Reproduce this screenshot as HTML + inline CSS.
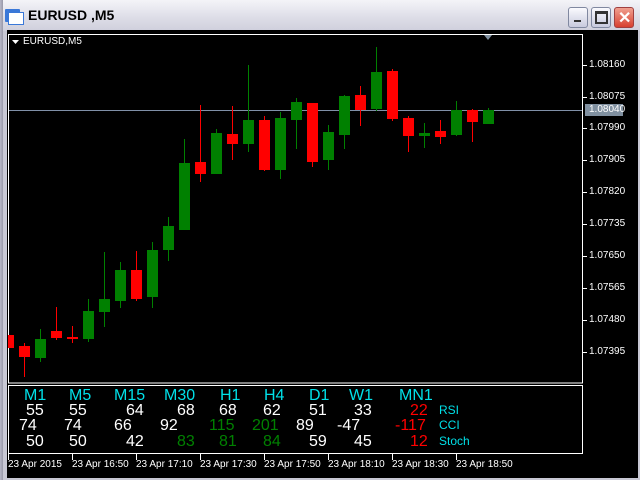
<!DOCTYPE html>
<html><head><style>
body{margin:0;width:640px;height:480px;overflow:hidden;background:#c8c8d4;font-family:"Liberation Sans",sans-serif;position:relative}
.t{position:absolute;white-space:nowrap}
.s{font-size:16px;line-height:15px}
.c{color:#00e0e8}.w{color:#fff}.g{color:#008000}.r{color:#ff0000}
.ax{position:absolute;font-size:10px;color:#fff;line-height:10px}
</style></head><body>
<div style="position:absolute;left:0;top:0;width:640px;height:31px;background:linear-gradient(#f4f4f8,#dcdce6 60%,#cfcfdc)"></div>
<div style="position:absolute;left:0;top:0;width:3px;height:480px;background:linear-gradient(90deg,#b8b8c8,#9898a8)"></div>
<div style="position:absolute;left:5px;top:9px;width:15px;height:13px;background:#3a78d8;border-radius:1px"></div>
<div style="position:absolute;left:8px;top:12px;width:14px;height:11px;background:#fff;border:1px solid #3a78d8"></div>
<div class="t" style="left:28px;top:7px;font-size:14px;font-weight:bold;color:#000">EURUSD ,M5</div>
<div style="position:absolute;left:568px;top:7px;width:18px;height:19px;border:1px solid #8088a0;border-radius:3px;background:linear-gradient(#fafafe,#c8cade)"><div style="position:absolute;left:5px;top:12px;width:7px;height:2px;background:#333"></div></div>
<div style="position:absolute;left:591px;top:7px;width:18px;height:19px;border:1px solid #8088a0;border-radius:3px;background:linear-gradient(#fafafe,#c8cade)"><div style="position:absolute;left:3px;top:3px;width:9px;height:8px;border:2px solid #333;border-top-width:3px"></div></div>
<div style="position:absolute;left:614px;top:7px;width:18px;height:19px;border:1px solid #a04040;border-radius:3px;background:linear-gradient(#f0a090,#d84030)"><div class="t" style="left:3px;top:0px;color:#fff;font-size:16px;font-weight:bold">✕</div></div>
<div style="position:absolute;left:7px;top:30px;width:631px;height:448px;background:#000"></div>
<svg style="position:absolute;left:0;top:0" width="640" height="480">
<rect x="8.5" y="34.5" width="574" height="348.5" fill="none" stroke="#fff"/>
<rect x="8.5" y="385.5" width="574" height="68" fill="none" stroke="#fff"/>
<polygon points="484,35 492,35 488,40" fill="#8090a0"/>
<polygon points="12,40 19,40 15.5,44" fill="#fff"/>
<line x1="9" y1="110.5" x2="582" y2="110.5" stroke="#8090a8"/>
<g fill="#ff0000" stroke="#ff0000">
<rect x="8" y="335" width="6" height="13" stroke="none"/>
<line x1="24.5" y1="343" x2="24.5" y2="377"/><rect x="19" y="346" width="11" height="11" stroke="none"/>
<line x1="56.5" y1="307" x2="56.5" y2="340"/><rect x="51" y="331" width="11" height="7" stroke="none"/>
<line x1="72.5" y1="326" x2="72.5" y2="343"/><rect x="67" y="337" width="11" height="2" stroke="none"/>
<line x1="136.5" y1="251" x2="136.5" y2="301"/><rect x="131" y="270" width="11" height="29" stroke="none"/>
<line x1="200.5" y1="105" x2="200.5" y2="182"/><rect x="195" y="162" width="11" height="12" stroke="none"/>
<line x1="232.5" y1="106" x2="232.5" y2="160"/><rect x="227" y="134" width="11" height="10" stroke="none"/>
<line x1="264.5" y1="116" x2="264.5" y2="171"/><rect x="259" y="120" width="11" height="50" stroke="none"/>
<line x1="312.5" y1="103" x2="312.5" y2="167"/><rect x="307" y="103" width="11" height="59" stroke="none"/>
<line x1="360.5" y1="86" x2="360.5" y2="126"/><rect x="355" y="95" width="11" height="15" stroke="none"/>
<line x1="392.5" y1="69" x2="392.5" y2="121"/><rect x="387" y="71" width="11" height="48" stroke="none"/>
<line x1="408.5" y1="116" x2="408.5" y2="152"/><rect x="403" y="118" width="11" height="18" stroke="none"/>
<line x1="440.5" y1="120" x2="440.5" y2="144"/><rect x="435" y="131" width="11" height="6" stroke="none"/>
<line x1="472.5" y1="109" x2="472.5" y2="142"/><rect x="467" y="110" width="11" height="12" stroke="none"/>
</g>
<g fill="#008000" stroke="#008000">
<line x1="40.5" y1="329" x2="40.5" y2="362"/><rect x="35" y="339" width="11" height="19" stroke="none"/>
<line x1="88.5" y1="299" x2="88.5" y2="342"/><rect x="83" y="311" width="11" height="28" stroke="none"/>
<line x1="104.5" y1="252" x2="104.5" y2="327"/><rect x="99" y="299" width="11" height="13" stroke="none"/>
<line x1="120.5" y1="262" x2="120.5" y2="308"/><rect x="115" y="270" width="11" height="31" stroke="none"/>
<line x1="152.5" y1="242" x2="152.5" y2="308"/><rect x="147" y="250" width="11" height="47" stroke="none"/>
<line x1="168.5" y1="217" x2="168.5" y2="261"/><rect x="163" y="226" width="11" height="24" stroke="none"/>
<line x1="184.5" y1="139" x2="184.5" y2="230"/><rect x="179" y="163" width="11" height="67" stroke="none"/>
<line x1="216.5" y1="129" x2="216.5" y2="174"/><rect x="211" y="133" width="11" height="41" stroke="none"/>
<line x1="248.5" y1="65" x2="248.5" y2="152"/><rect x="243" y="120" width="11" height="24" stroke="none"/>
<line x1="280.5" y1="112" x2="280.5" y2="179"/><rect x="275" y="118" width="11" height="52" stroke="none"/>
<line x1="296.5" y1="98" x2="296.5" y2="149"/><rect x="291" y="102" width="11" height="18" stroke="none"/>
<line x1="328.5" y1="125" x2="328.5" y2="170"/><rect x="323" y="132" width="11" height="28" stroke="none"/>
<line x1="344.5" y1="95" x2="344.5" y2="149"/><rect x="339" y="96" width="11" height="39" stroke="none"/>
<line x1="376.5" y1="47" x2="376.5" y2="111"/><rect x="371" y="72" width="11" height="37" stroke="none"/>
<line x1="424.5" y1="123" x2="424.5" y2="148"/><rect x="419" y="133" width="11" height="3" stroke="none"/>
<line x1="456.5" y1="101" x2="456.5" y2="136"/><rect x="451" y="110" width="11" height="25" stroke="none"/>
<line x1="488.5" y1="108" x2="488.5" y2="124"/><rect x="483" y="110" width="11" height="14" stroke="none"/>
</g>
<g stroke="#fff">
<line x1="583" y1="65.5" x2="587" y2="65.5"/><line x1="583" y1="97.5" x2="587" y2="97.5"/>
<line x1="583" y1="128.5" x2="587" y2="128.5"/><line x1="583" y1="160.5" x2="587" y2="160.5"/>
<line x1="583" y1="192.5" x2="587" y2="192.5"/><line x1="583" y1="224.5" x2="587" y2="224.5"/>
<line x1="583" y1="256.5" x2="587" y2="256.5"/><line x1="583" y1="288.5" x2="587" y2="288.5"/>
<line x1="583" y1="320.5" x2="587" y2="320.5"/><line x1="583" y1="352.5" x2="587" y2="352.5"/>
<line x1="8.5" y1="454" x2="8.5" y2="460"/><line x1="72.5" y1="454" x2="72.5" y2="460"/>
<line x1="136.5" y1="454" x2="136.5" y2="460"/><line x1="200.5" y1="454" x2="200.5" y2="460"/>
<line x1="264.5" y1="454" x2="264.5" y2="460"/><line x1="328.5" y1="454" x2="328.5" y2="460"/>
<line x1="392.5" y1="454" x2="392.5" y2="460"/><line x1="456.5" y1="454" x2="456.5" y2="460"/>
</g>
<rect x="585" y="104" width="38" height="12" fill="#8090a0"/>
</svg>
<div class="ax" style="left:589px;top:60px">1.08160</div>
<div class="ax" style="left:589px;top:92px">1.08075</div>
<div class="ax" style="left:589px;top:105px">1.08040</div>
<div class="ax" style="left:589px;top:123px">1.07990</div>
<div class="ax" style="left:589px;top:155px">1.07905</div>
<div class="ax" style="left:589px;top:187px">1.07820</div>
<div class="ax" style="left:589px;top:219px">1.07735</div>
<div class="ax" style="left:589px;top:251px">1.07650</div>
<div class="ax" style="left:589px;top:283px">1.07565</div>
<div class="ax" style="left:589px;top:315px">1.07480</div>
<div class="ax" style="left:589px;top:347px">1.07395</div>
<div class="ax" style="left:23px;top:37px">EURUSD,M5</div>
<div class="ax" style="left:8px;top:460px">23 Apr 2015</div>
<div class="ax" style="left:72px;top:460px">23 Apr 16:50</div>
<div class="ax" style="left:136px;top:460px">23 Apr 17:10</div>
<div class="ax" style="left:200px;top:460px">23 Apr 17:30</div>
<div class="ax" style="left:264px;top:460px">23 Apr 17:50</div>
<div class="ax" style="left:328px;top:460px">23 Apr 18:10</div>
<div class="ax" style="left:392px;top:460px">23 Apr 18:30</div>
<div class="ax" style="left:456px;top:460px">23 Apr 18:50</div>
<div class="t s c" style="left:24px;top:388px">M1</div>
<div class="t s c" style="left:69px;top:388px">M5</div>
<div class="t s c" style="left:114px;top:388px">M15</div>
<div class="t s c" style="left:164px;top:388px">M30</div>
<div class="t s c" style="left:220px;top:388px">H1</div>
<div class="t s c" style="left:264px;top:388px">H4</div>
<div class="t s c" style="left:309px;top:388px">D1</div>
<div class="t s c" style="left:349px;top:388px">W1</div>
<div class="t s c" style="left:399px;top:388px">MN1</div>
<div class="t s w" style="left:26px;top:403px">55</div>
<div class="t s w" style="left:69px;top:403px">55</div>
<div class="t s w" style="left:126px;top:403px">64</div>
<div class="t s w" style="left:177px;top:403px">68</div>
<div class="t s w" style="left:219px;top:403px">68</div>
<div class="t s w" style="left:263px;top:403px">62</div>
<div class="t s w" style="left:309px;top:403px">51</div>
<div class="t s w" style="left:354px;top:403px">33</div>
<div class="t s r" style="left:410px;top:403px">22</div>
<div class="t c" style="left:439px;top:403px;font-size:12px">RSI</div>
<div class="t s w" style="left:19px;top:418px">74</div>
<div class="t s w" style="left:64px;top:418px">74</div>
<div class="t s w" style="left:114px;top:418px">66</div>
<div class="t s w" style="left:160px;top:418px">92</div>
<div class="t s g" style="left:209px;top:418px">115</div>
<div class="t s g" style="left:252px;top:418px">201</div>
<div class="t s w" style="left:296px;top:418px">89</div>
<div class="t s w" style="left:337px;top:418px">-47</div>
<div class="t s r" style="left:395px;top:418px">-117</div>
<div class="t c" style="left:439px;top:418px;font-size:12px">CCI</div>
<div class="t s w" style="left:26px;top:434px">50</div>
<div class="t s w" style="left:69px;top:434px">50</div>
<div class="t s w" style="left:126px;top:434px">42</div>
<div class="t s g" style="left:177px;top:434px">83</div>
<div class="t s g" style="left:219px;top:434px">81</div>
<div class="t s g" style="left:263px;top:434px">84</div>
<div class="t s w" style="left:309px;top:434px">59</div>
<div class="t s w" style="left:354px;top:434px">45</div>
<div class="t s r" style="left:410px;top:434px">12</div>
<div class="t c" style="left:439px;top:434px;font-size:12px">Stoch</div>
</body></html>
